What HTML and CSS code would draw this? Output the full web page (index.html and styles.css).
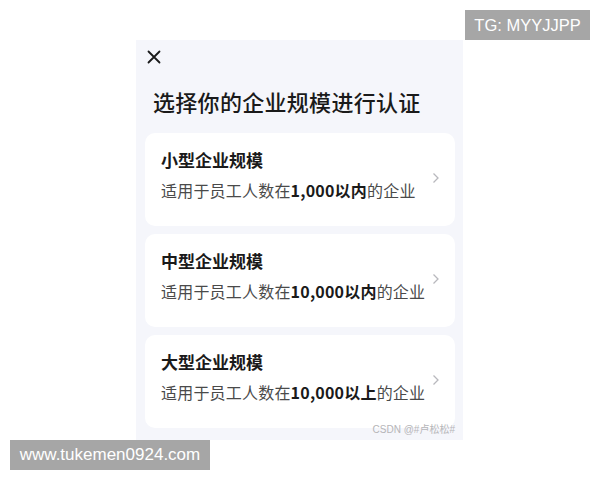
FILE: index.html
```html
<!DOCTYPE html>
<html lang="zh">
<head>
<meta charset="utf-8">
<link rel="stylesheet" href="styles.css">
</head>
<body>
<div class="page">
  <div class="panel">
    <div class="close">
      <svg width="14" height="14" viewBox="0 0 14 14"><path d="M1.5 1.5L12.5 12.5M12.5 1.5L1.5 12.5" stroke="#1a1a1a" stroke-width="1.8" stroke-linecap="round"/></svg>
    </div>
    <h1 class="title">选择你的企业规模进行认证</h1>
    <div class="cards">
      <div class="card">
        <div class="card-text">
          <div class="card-title">小型企业规模</div>
          <div class="card-sub">适用于员工人数在<b>1,000以内</b>的企业</div>
        </div>
        <svg class="chev" width="8" height="12" viewBox="0 0 8 12"><path d="M1.5 1.5L6 6L1.5 10.5" fill="none" stroke="#b8b8bd" stroke-width="1.3"/></svg>
      </div>
      <div class="card">
        <div class="card-text">
          <div class="card-title">中型企业规模</div>
          <div class="card-sub">适用于员工人数在<b>10,000以内</b>的企业</div>
        </div>
        <svg class="chev" width="8" height="12" viewBox="0 0 8 12"><path d="M1.5 1.5L6 6L1.5 10.5" fill="none" stroke="#b8b8bd" stroke-width="1.3"/></svg>
      </div>
      <div class="card">
        <div class="card-text">
          <div class="card-title">大型企业规模</div>
          <div class="card-sub">适用于员工人数在<b>10,000以上</b>的企业</div>
        </div>
        <svg class="chev" width="8" height="12" viewBox="0 0 8 12"><path d="M1.5 1.5L6 6L1.5 10.5" fill="none" stroke="#b8b8bd" stroke-width="1.3"/></svg>
      </div>
    </div>
    <div class="csdn">CSDN @#卢松松#</div>
  </div>
  <div class="tag tag-tg">TG: MYYJJPP</div>
  <div class="tag tag-www">www.tukemen0924.com</div>
</div>
</body>
</html>
```
FILE: styles.css
```css
html, body {
  margin: 0;
  padding: 0;
  background: #ffffff;
  font-family: "Noto Sans CJK SC", "Noto Sans", sans-serif;
}
.page {
  position: relative;
  width: 600px;
  height: 480px;
  overflow: hidden;
}
.panel {
  position: relative;
  margin: 40px 0 0 136px;
  width: 327px;
  height: 400px;
  background: #f5f6fb;
  box-sizing: border-box;
  padding: 0 8px 0 9px;
}
.close {
  width: 14px;
  height: 14px;
  padding: 10px 0 0 2px;
}
.close svg { display: block; }
.title {
  margin: 22px 0 0 8px;
  font-size: 22px;
  font-weight: 500;
  line-height: 30px;
  color: #1a1a1a;
  letter-spacing: 0.3px;
}
.cards {
  margin-top: 17px;
  display: flex;
  flex-direction: column;
  gap: 8px;
}
.card {
  height: 93px;
  background: #ffffff;
  border-radius: 10px;
  display: flex;
  align-items: center;
  padding: 0 15px 0 16px;
}
.card-text {
  flex: 1;
  display: flex;
  flex-direction: column;
  gap: 7px;
  margin-top: -10px;
}
.card-title {
  font-size: 17px;
  font-weight: 700;
  line-height: 24px;
  color: #1a1a1a;
}
.card-sub {
  font-size: 16px;
  line-height: 22px;
  color: #4a4a4a;
  letter-spacing: 0.2px;
}
.card-sub b {
  font-weight: 700;
  color: #1a1a1a;
}
.chev { flex: none; margin-top: -4px; }
.csdn {
  position: absolute;
  right: 8px;
  bottom: 4px;
  font-size: 10px;
  color: #b5b5b8;
  font-family: "Liberation Sans", "Noto Sans CJK SC", sans-serif;
}
.tag {
  position: absolute;
  background: #a6a6a6;
  color: #ffffff;
  font-family: "Liberation Sans", Arial, sans-serif;
  line-height: 30px;
  text-align: center;
}
.tag-tg {
  left: 465px;
  top: 10px;
  width: 125px;
  height: 30px;
  font-size: 16.5px;
}
.tag-www {
  left: 10px;
  top: 440px;
  width: 200px;
  height: 30px;
  font-size: 17px;
}
```
